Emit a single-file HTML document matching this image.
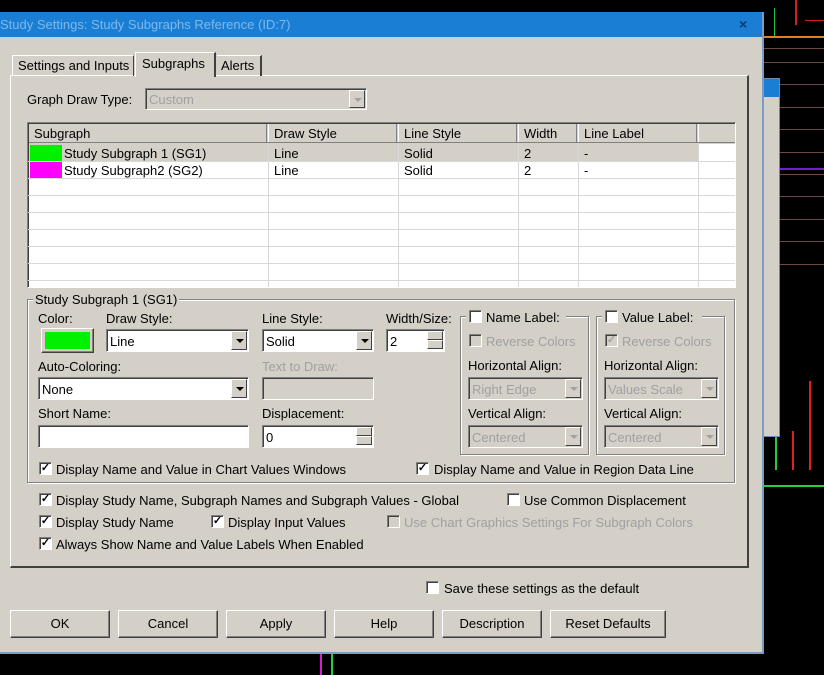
<!DOCTYPE html>
<html><head><meta charset="utf-8"><style>
*{box-sizing:border-box;margin:0;padding:0}
body{width:824px;height:675px;background:#000;position:relative;overflow:hidden;font-family:"Liberation Sans",sans-serif;font-size:13px;color:#000}
.a{position:absolute}
.t{position:absolute;white-space:nowrap;line-height:15px}
.g{color:#a0a0a0}
.sunk{position:absolute;border-top:1px solid #808080;border-left:1px solid #808080;border-right:1px solid #fff;border-bottom:1px solid #fff;background:#fff}
.sunk::before{content:"";position:absolute;inset:0;border-top:1px solid #404040;border-left:1px solid #404040}
.dis{background:#d4d0c8}
.arr{position:absolute;right:1px;top:1px;bottom:1px;width:16px;background:#d4d0c8;border-top:1px solid #fff;border-left:1px solid #fff;border-right:1px solid #404040;border-bottom:1px solid #404040}
.arr::after{content:"";position:absolute;left:4px;top:7px;border-left:4px solid transparent;border-right:4px solid transparent;border-top:4px solid #000}
.arr.d::after{border-top-color:#a0a0a0}
.btn{position:absolute;height:28px;background:#d4d0c8;border-top:1px solid #fff;border-left:1px solid #fff;border-right:1px solid #404040;border-bottom:1px solid #404040;text-align:center;line-height:25px;box-shadow:inset -1px -1px 0 #808080}
.cb{position:absolute;width:13px;height:13px;background:#fff;border-top:1px solid #808080;border-left:1px solid #808080;border-right:1px solid #fff;border-bottom:1px solid #fff;box-shadow:inset 1px 1px 0 #404040;font-size:11px;line-height:11px;text-align:center;font-weight:bold}
.cb.dd{background:#d4d0c8;color:#a0a0a0}
.grp{position:absolute;border:1px solid #808080;box-shadow:inset 1px 1px 0 #fff,1px 1px 0 #fff}
.spin{position:absolute;right:1px;width:16px;height:9px;background:#d4d0c8;border-top:1px solid #fff;border-left:1px solid #fff;border-right:1px solid #404040;border-bottom:1px solid #404040}
.hl{position:absolute;height:1px;background:#d8d8d8;left:0;right:0}
.vl{position:absolute;width:1px;background:#d8d8d8;top:0;bottom:0}
</style></head><body>
<!-- background chart lines -->
<div class="a" style="left:764px;top:36px;width:60px;height:2px;background:#e08020"></div>
<div class="a" style="left:764px;top:48px;width:60px;height:1px;background:#6a4a40"></div>
<div class="a" style="left:764px;top:62px;width:60px;height:1px;background:#6a4a40"></div>
<div class="a" style="left:764px;top:84px;width:60px;height:1px;background:#6a4a40"></div>
<div class="a" style="left:764px;top:107px;width:60px;height:1px;background:#6a4a40"></div>
<div class="a" style="left:764px;top:129px;width:60px;height:1px;background:#6a4a40"></div>
<div class="a" style="left:764px;top:152px;width:60px;height:1px;background:#6a4a40"></div>
<div class="a" style="left:764px;top:174px;width:60px;height:1px;background:#6a4a40"></div>
<div class="a" style="left:780px;top:168px;width:44px;height:2px;background:#7020d0"></div>
<div class="a" style="left:764px;top:196px;width:60px;height:1px;background:#6a4a40"></div>
<div class="a" style="left:764px;top:219px;width:60px;height:1px;background:#6a4a40"></div>
<div class="a" style="left:764px;top:241px;width:60px;height:1px;background:#6a4a40"></div>
<div class="a" style="left:764px;top:264px;width:60px;height:1px;background:#6a4a40"></div>
<div class="a" style="left:775px;top:437px;width:2px;height:33px;background:#20d040"></div>
<div class="a" style="left:792px;top:431px;width:2px;height:39px;background:#e02020"></div>
<div class="a" style="left:809px;top:381px;width:2px;height:89px;background:#e02020"></div>
<div class="a" style="left:764px;top:485px;width:60px;height:2px;background:#20d040"></div>
<div class="a" style="left:795px;top:0;width:2px;height:25px;background:#d02020"></div>
<div class="a" style="left:805px;top:20px;width:19px;height:1px;background:#d02020"></div>
<div class="a" style="left:774px;top:8px;width:1px;height:28px;background:#20c040"></div>
<div class="a" style="left:320px;top:653px;width:2px;height:22px;background:#d020d0"></div>
<div class="a" style="left:331px;top:653px;width:2px;height:22px;background:#20d040"></div>
<!-- back window -->
<div class="a" style="left:763px;top:78px;width:17px;height:359px;background:#d4d0c8;border:1px solid #6a8ab0"></div>
<div class="a" style="left:764px;top:79px;width:15px;height:18px;background:#1a7fd4"></div>
<!-- dialog -->
<div class="a" style="left:0;top:12px;width:764px;height:642px;background:#d4d0c8;border-right:2px solid #7a9cc0;border-bottom:2px solid #7a9cc0"></div>
<div class="a" style="left:0;top:12px;width:762px;height:25px;background:#1a7fd4"></div>
<div class="t" style="left:0;top:17px;color:#7fb8ea;font-size:13px">Study Settings: Study Subgraphs Reference (ID:7)</div>
<div class="t" style="left:739px;top:17px;color:#0a3a70;font-weight:bold;font-size:14px">×</div>
<!-- tab panel -->
<div class="a" style="left:10px;top:75px;width:739px;height:493px;border-top:1px solid #fff;border-left:1px solid #fff;border-right:2px solid #404040;border-bottom:2px solid #404040"></div>
<div class="a" style="left:12px;top:55px;width:122px;height:21px;border-top:1px solid #fff;border-left:1px solid #fff;border-right:1px solid #404040"></div>
<div class="t" style="left:18px;top:58px">Settings and Inputs</div>
<div class="a" style="left:135px;top:52px;width:81px;height:25px;background:#d4d0c8;border-top:1px solid #fff;border-left:1px solid #fff;border-right:2px solid #404040"></div>
<div class="t" style="left:142px;top:56px">Subgraphs</div>
<div class="a" style="left:217px;top:55px;width:45px;height:21px;border-top:1px solid #fff;border-right:2px solid #404040"></div>
<div class="t" style="left:221px;top:58px">Alerts</div>
<!-- graph draw type -->
<div class="t" style="left:27px;top:92px">Graph Draw Type:</div>
<div class="sunk dis" style="left:145px;top:88px;width:222px;height:22px"><span class="t g" style="left:3px;top:3px">Custom</span><div class="arr d"></div></div>
<!-- table -->
<div class="sunk" style="left:27px;top:122px;width:709px;height:166px;overflow:hidden">
 <div class="a" style="left:1px;top:1px;width:706px;height:20px;background:#d4d0c8"></div>
 <div class="a" style="left:1px;top:21px;width:670px;height:17px;background:#d4d0c8"></div>
 <div class="hl" style="top:38px"></div><div class="hl" style="top:55px"></div><div class="hl" style="top:72px"></div><div class="hl" style="top:89px"></div><div class="hl" style="top:106px"></div><div class="hl" style="top:123px"></div><div class="hl" style="top:140px"></div><div class="hl" style="top:157px"></div>
 <div class="vl" style="left:240px;top:20px"></div><div class="vl" style="left:370px;top:20px"></div><div class="vl" style="left:490px;top:20px"></div><div class="vl" style="left:550px;top:20px"></div><div class="vl" style="left:670px;top:20px"></div>
 <div class="a" style="left:240px;top:1px;width:1px;height:19px;background:#fff"></div><div class="a" style="left:238px;top:1px;width:1px;height:19px;background:#808080"></div>
 <div class="a" style="left:370px;top:1px;width:1px;height:19px;background:#fff"></div><div class="a" style="left:368px;top:1px;width:1px;height:19px;background:#808080"></div>
 <div class="a" style="left:490px;top:1px;width:1px;height:19px;background:#fff"></div><div class="a" style="left:488px;top:1px;width:1px;height:19px;background:#808080"></div>
 <div class="a" style="left:550px;top:1px;width:1px;height:19px;background:#fff"></div><div class="a" style="left:548px;top:1px;width:1px;height:19px;background:#808080"></div>
 <div class="a" style="left:670px;top:1px;width:1px;height:19px;background:#fff"></div><div class="a" style="left:668px;top:1px;width:1px;height:19px;background:#808080"></div>
 <div class="a" style="left:1px;top:19px;width:706px;height:1px;background:#808080"></div>
 <span class="t" style="left:6px;top:3px">Subgraph</span><span class="t" style="left:246px;top:3px">Draw Style</span><span class="t" style="left:376px;top:3px">Line Style</span><span class="t" style="left:496px;top:3px">Width</span><span class="t" style="left:556px;top:3px">Line Label</span>
 <div class="a" style="left:2px;top:22px;width:32px;height:16px;background:#00f000"></div>
 <div class="a" style="left:2px;top:39px;width:32px;height:16px;background:#ff00ff"></div>
 <span class="t" style="left:36px;top:23px">Study Subgraph 1 (SG1)</span><span class="t" style="left:246px;top:23px">Line</span><span class="t" style="left:376px;top:23px">Solid</span><span class="t" style="left:496px;top:23px">2</span><span class="t" style="left:556px;top:23px">-</span>
 <span class="t" style="left:36px;top:40px">Study Subgraph2 (SG2)</span><span class="t" style="left:246px;top:40px">Line</span><span class="t" style="left:376px;top:40px">Solid</span><span class="t" style="left:496px;top:40px">2</span><span class="t" style="left:556px;top:40px">-</span>
</div>
<!-- group -->
<div class="grp" style="left:27px;top:299px;width:708px;height:184px"></div>
<div class="t" style="left:33px;top:292px;background:#d4d0c8;padding:0 2px">Study Subgraph 1 (SG1)</div>
<div class="t" style="left:38px;top:311px">Color:</div>
<div class="btn" style="left:41px;top:328px;width:53px;height:25px"><div class="a" style="left:3px;top:3px;right:3px;bottom:3px;background:#00f000"></div></div>
<div class="t" style="left:106px;top:311px">Draw Style:</div>
<div class="sunk" style="left:106px;top:329px;width:143px;height:23px"><span class="t" style="left:3px;top:4px">Line</span><div class="arr"></div></div>
<div class="t" style="left:262px;top:311px">Line Style:</div>
<div class="sunk" style="left:262px;top:329px;width:112px;height:23px"><span class="t" style="left:3px;top:4px">Solid</span><div class="arr"></div></div>
<div class="t" style="left:386px;top:311px">Width/Size:</div>
<div class="sunk" style="left:386px;top:329px;width:59px;height:23px"><span class="t" style="left:3px;top:4px">2</span><div class="spin" style="top:1px"></div><div class="spin" style="top:10px"></div></div>
<div class="t" style="left:38px;top:359px">Auto-Coloring:</div>
<div class="sunk" style="left:38px;top:377px;width:211px;height:23px"><span class="t" style="left:3px;top:4px">None</span><div class="arr"></div></div>
<div class="t g" style="left:262px;top:359px">Text to Draw:</div>
<div class="sunk dis" style="left:262px;top:377px;width:112px;height:23px"></div>
<div class="t" style="left:38px;top:406px">Short Name:</div>
<div class="sunk" style="left:38px;top:425px;width:211px;height:23px"></div>
<div class="t" style="left:262px;top:406px">Displacement:</div>
<div class="sunk" style="left:262px;top:425px;width:112px;height:23px"><span class="t" style="left:3px;top:4px">0</span><div class="spin" style="top:1px"></div><div class="spin" style="top:10px"></div></div>
<div class="cb" style="left:39px;top:462px">✓</div><div class="t" style="left:56px;top:462px">Display Name and Value in Chart Values Windows</div>
<div class="cb" style="left:416px;top:462px">✓</div><div class="t" style="left:434px;top:462px">Display Name and Value in Region Data Line</div>
<!-- name label group -->
<div class="grp" style="left:460px;top:316px;width:129px;height:139px"></div>
<div class="a" style="left:466px;top:308px;width:100px;height:16px;background:#d4d0c8"></div>
<div class="cb" style="left:469px;top:310px"></div><div class="t" style="left:486px;top:310px">Name Label:</div>
<div class="cb dd" style="left:469px;top:334px"></div><div class="t g" style="left:486px;top:334px">Reverse Colors</div>
<div class="t" style="left:468px;top:358px">Horizontal Align:</div>
<div class="sunk dis" style="left:468px;top:377px;width:115px;height:23px"><span class="t g" style="left:3px;top:4px">Right Edge</span><div class="arr d"></div></div>
<div class="t" style="left:468px;top:406px">Vertical Align:</div>
<div class="sunk dis" style="left:468px;top:425px;width:115px;height:23px"><span class="t g" style="left:3px;top:4px">Centered</span><div class="arr d"></div></div>
<!-- value label group -->
<div class="grp" style="left:596px;top:316px;width:129px;height:139px"></div>
<div class="a" style="left:602px;top:308px;width:100px;height:16px;background:#d4d0c8"></div>
<div class="cb" style="left:605px;top:310px"></div><div class="t" style="left:622px;top:310px">Value Label:</div>
<div class="cb dd" style="left:605px;top:334px">✓</div><div class="t g" style="left:622px;top:334px">Reverse Colors</div>
<div class="t" style="left:604px;top:358px">Horizontal Align:</div>
<div class="sunk dis" style="left:604px;top:377px;width:115px;height:23px"><span class="t g" style="left:3px;top:4px">Values Scale</span><div class="arr d"></div></div>
<div class="t" style="left:604px;top:406px">Vertical Align:</div>
<div class="sunk dis" style="left:604px;top:425px;width:115px;height:23px"><span class="t g" style="left:3px;top:4px">Centered</span><div class="arr d"></div></div>
<!-- bottom checkboxes -->
<div class="cb" style="left:39px;top:493px">✓</div><div class="t" style="left:56px;top:493px">Display Study Name, Subgraph Names and Subgraph Values - Global</div>
<div class="cb" style="left:507px;top:493px"></div><div class="t" style="left:524px;top:493px">Use Common Displacement</div>
<div class="cb" style="left:39px;top:515px">✓</div><div class="t" style="left:56px;top:515px">Display Study Name</div>
<div class="cb" style="left:211px;top:515px">✓</div><div class="t" style="left:228px;top:515px">Display Input Values</div>
<div class="cb dd" style="left:387px;top:515px"></div><div class="t g" style="left:404px;top:515px">Use Chart Graphics Settings For Subgraph Colors</div>
<div class="cb" style="left:39px;top:537px">✓</div><div class="t" style="left:56px;top:537px">Always Show Name and Value Labels When Enabled</div>
<div class="cb" style="left:426px;top:581px"></div><div class="t" style="left:444px;top:581px">Save these settings as the default</div>
<!-- buttons -->
<div class="btn" style="left:10px;top:610px;width:100px">OK</div>
<div class="btn" style="left:118px;top:610px;width:100px">Cancel</div>
<div class="btn" style="left:226px;top:610px;width:100px">Apply</div>
<div class="btn" style="left:334px;top:610px;width:100px">Help</div>
<div class="btn" style="left:442px;top:610px;width:100px">Description</div>
<div class="btn" style="left:550px;top:610px;width:116px">Reset Defaults</div>
</body></html>
